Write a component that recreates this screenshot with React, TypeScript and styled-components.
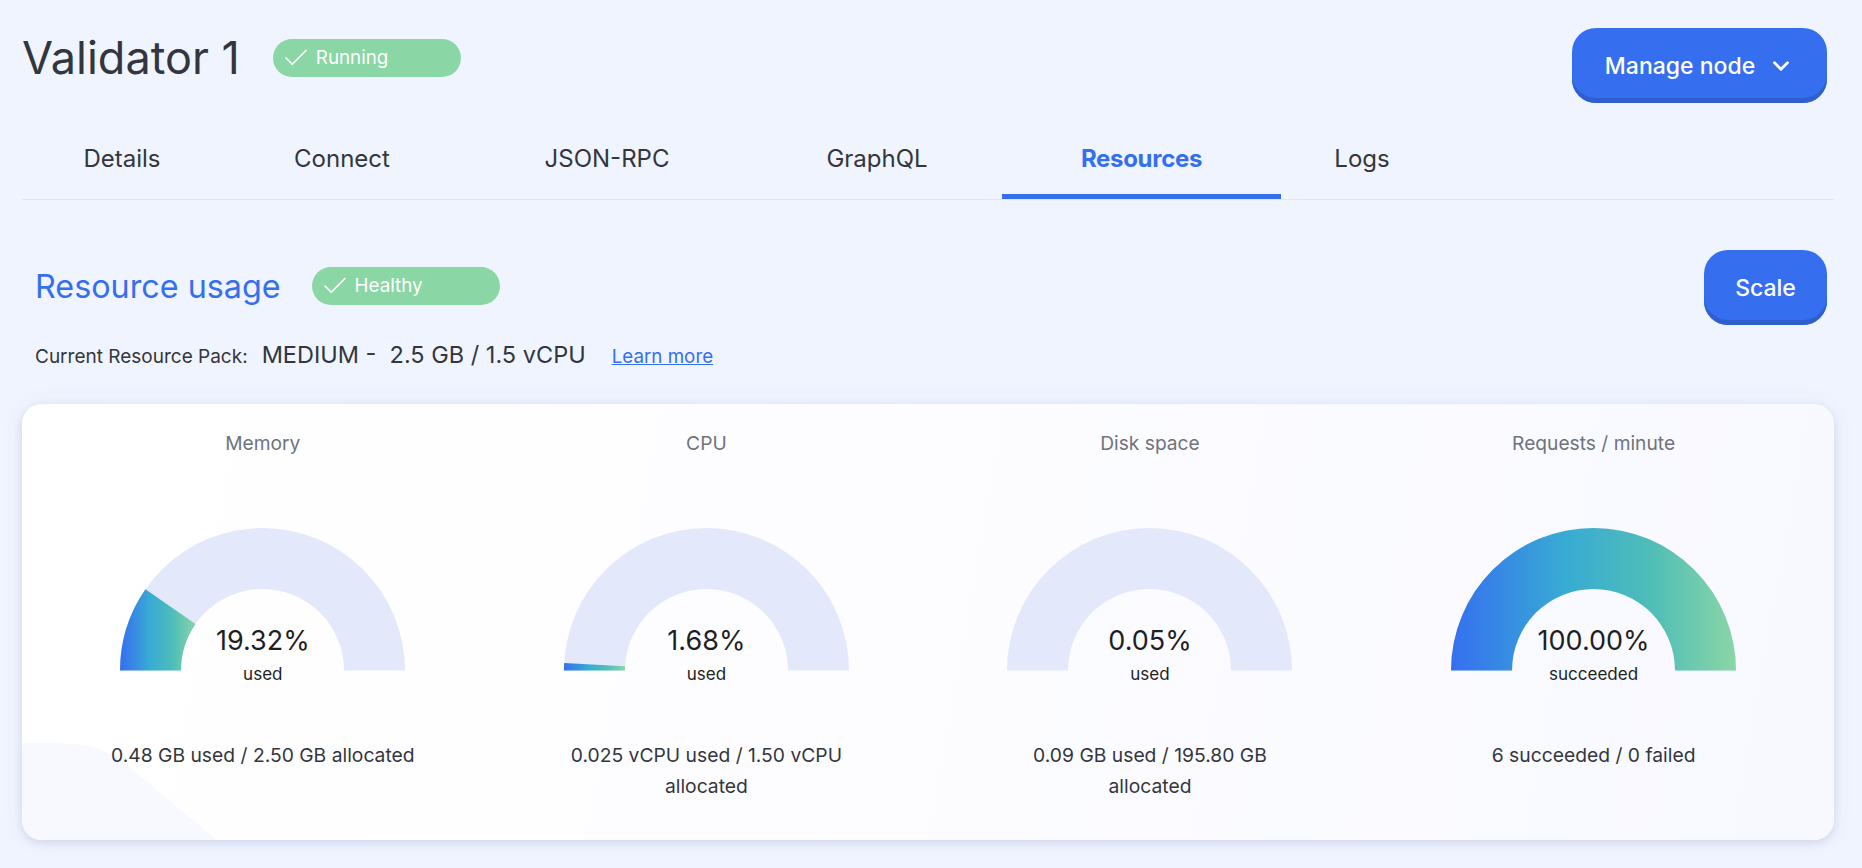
import { useId } from 'react';
import styled, { createGlobalStyle } from 'styled-components';
import { Check, ChevronDown } from 'lucide-react';

const GlobalStyle = createGlobalStyle`
	html, body {
		margin: 0;
		background: #f0f4ff;
	}
	body {
		font-family: Inter, "Noto Sans", sans-serif;
		color: #33363d;
	}
	* {
		box-sizing: border-box;
	}
`;

const Page = styled.div`
	width: 1862px;
	height: 868px;
	overflow: hidden;
	padding: 28px 28px 0 22px;
`;

const HeaderRow = styled.header`
	display: flex;
	justify-content: space-between;
	align-items: flex-start;
	padding-right: 7px;
`;

const TitleGroup = styled.div`
	display: flex;
	align-items: center;
	margin-top: 4px;
	height: 52px;
	gap: 33px;
`;

const Title = styled.h1`
	margin: 0;
	font-size: 45px;
	line-height: 52px;
	font-weight: 400;
	color: #33363d;
`;

const Badge = styled.span`
	display: flex;
	align-items: center;
	gap: 5px;
	width: 188px;
	height: 38px;
	padding-left: 8px;
	border-radius: 19px;
	background: #8ad6a5;
	color: #fff;
	font-size: 18.8px;
	line-height: 20px;
`;

const Button = styled.button<{ $width: number }>`
	display: flex;
	align-items: center;
	justify-content: center;
	gap: 13px;
	width: ${(p) => p.$width}px;
	height: 75px;
	padding: 0;
	border: 0;
	border-radius: 24px;
	background: #356ff0;
	box-shadow: inset 0 -5px 0 #2f5fcc;
	color: #fff;
	font-family: inherit;
	font-size: 23px;
	font-weight: 500;
`;

const Tabs = styled.nav`
	display: grid;
	grid-template-columns: 200px 240px 290px 250px 279px 162px;
	margin-top: 17px;
	border-bottom: 1px solid #dfe5f6;
`;

const Tab = styled.a<{ $active?: boolean }>`
	display: flex;
	align-items: center;
	justify-content: center;
	height: 79px;
	padding-top: 2px;
	border-bottom: 5px solid ${(p) => (p.$active ? '#356ff0' : 'transparent')};
	font-size: 24px;
	font-weight: ${(p) => (p.$active ? 700 : 400)};
	letter-spacing: ${(p) => (p.$active ? '-0.3px' : '0')};
	color: ${(p) => (p.$active ? '#356ff0' : '#33363d')};
`;

const SectionRow = styled.section`
	display: flex;
	justify-content: space-between;
	align-items: flex-start;
	margin-top: 50px;
	padding: 0 7px 0 13px;
`;

const SectionTitleGroup = styled.div`
	display: flex;
	align-items: center;
	gap: 31px;
	margin-top: 17px;
	height: 38px;
`;

const SectionTitle = styled.h2`
	margin: 0;
	padding-top: 2px;
	font-size: 32.3px;
	line-height: 38px;
	font-weight: 400;
	color: #356ff0;
`;

const PackRow = styled.div`
	display: flex;
	align-items: baseline;
	height: 30px;
	margin-top: 15px;
	padding-left: 13px;
`;

const PackLabel = styled.span`
	font-size: 19px;
	line-height: 30px;
	color: #33363d;
`;

const PackValue = styled.span`
	margin-left: 14px;
	font-size: 23.5px;
	line-height: 30px;
	white-space: pre;
	color: #33363d;
`;

const LearnMore = styled.a`
	margin-left: 26px;
	font-size: 18.8px;
	line-height: 30px;
	color: #356ff0;
	text-decoration: underline;
`;

const Card = styled.div`
	position: relative;
	display: grid;
	grid-template-columns: repeat(4, 443.6px);
	height: 436px;
	margin-top: 34px;
	padding: 0 0 0 19px;
	overflow: hidden;
	border-radius: 20px;
	background: linear-gradient(100deg, #ffffff 0%, #fdfdff 45%, #f8f9ff 100%);
	box-shadow: 0 3px 9px rgba(70, 90, 150, 0.17), 0 0 24px rgba(70, 90, 150, 0.05);
	&::before {
		content: '';
		position: absolute;
		left: 0;
		bottom: 0;
		width: 195px;
		height: 97px;
		background: #f8f9ff;
		clip-path: path('M0 0 C 30 0 55 0 71 4 C 85 8 100 18 111 27 L 195 97 L0 97 Z');
	}
`;

const Column = styled.div`
	position: relative;
	display: flex;
	flex-direction: column;
	align-items: center;
	padding-top: 25px;
`;

const ColumnTitle = styled.div`
	font-size: 19.2px;
	line-height: 28px;
	color: #6f737c;
`;

const Gauge = styled.div`
	position: relative;
	width: 285px;
	height: 142px;
	margin-top: 71px;
	svg {
		display: block;
	}
`;

const GaugeText = styled.div`
	position: absolute;
	left: 0;
	right: 0;
	top: 96px;
	display: flex;
	flex-direction: column;
	align-items: center;
`;

const Percent = styled.div`
	font-size: 27px;
	line-height: 34px;
	color: #1d1f24;
`;

const GaugeCaption = styled.div`
	font-size: 17px;
	line-height: 32px;
	color: #1d1f24;
`;

const ColumnNote = styled.div`
	width: 312px;
	margin-top: 70px;
	font-size: 19.3px;
	line-height: 31px;
	text-align: center;
	color: #33363d;
`;

const OUTER = 142.5;
const INNER = 81.5;

// arc slice of the half ring, from the left end up to the given percent
const slicePath = (percent: number) => {
	const a = (Math.PI * percent) / 100;
	const cx = OUTER;
	const cy = OUTER;
	const ox = cx - OUTER * Math.cos(a);
	const oy = cy - OUTER * Math.sin(a);
	const ix = cx - INNER * Math.cos(a);
	const iy = cy - INNER * Math.sin(a);
	return `M${cx - OUTER} ${cy} A${OUTER} ${OUTER} 0 0 1 ${ox} ${oy} L${ix} ${iy} A${INNER} ${INNER} 0 0 0 ${cx - INNER} ${cy} Z`;
};

const GaugeChart = ({ percent }: { percent: number }) => {
	const id = useId();
	return (
		<svg width={285} height={142.5} viewBox='0 0 285 142.5'>
			<defs>
				<linearGradient id={id} x1='0' y1='0' x2='1' y2='0'>
					<stop offset='0%' stopColor='#356ff0' />
					<stop offset='40%' stopColor='#38abd3' />
					<stop offset='70%' stopColor='#4fbdb8' />
					<stop offset='100%' stopColor='#8ad6a5' />
				</linearGradient>
			</defs>
			<path d={slicePath(100)} fill='#e3e9fb' />
			{percent >= 0.1 && <path d={slicePath(percent)} fill={`url(#${id})`} />}
		</svg>
	);
};

const metrics = [
	{ title: 'Memory', percent: 19.32, caption: 'used', note: '0.48 GB used / 2.50 GB allocated' },
	{ title: 'CPU', percent: 1.68, caption: 'used', note: '0.025 vCPU used / 1.50 vCPU allocated' },
	{ title: 'Disk space', percent: 0.05, caption: 'used', note: '0.09 GB used / 195.80 GB allocated' },
	{ title: 'Requests / minute', percent: 100, caption: 'succeeded', note: '6 succeeded / 0 failed' },
];

const tabs = ['Details', 'Connect', 'JSON-RPC', 'GraphQL', 'Resources', 'Logs'];

const App = () => (
	<Page>
		<GlobalStyle />
		<HeaderRow>
			<TitleGroup>
				<Title>Validator 1</Title>
				<Badge>
					<Check size={30} strokeWidth={1.4} />
					Running
				</Badge>
			</TitleGroup>
			<Button $width={255}>
				Manage node
				<ChevronDown size={26} strokeWidth={2.6} />
			</Button>
		</HeaderRow>
		<Tabs>
			{tabs.map((t) => (
				<Tab key={t} $active={t === 'Resources'}>
					{t}
				</Tab>
			))}
		</Tabs>
		<SectionRow>
			<SectionTitleGroup>
				<SectionTitle>Resource usage</SectionTitle>
				<Badge>
					<Check size={30} strokeWidth={1.4} />
					Healthy
				</Badge>
			</SectionTitleGroup>
			<Button $width={123}>Scale</Button>
		</SectionRow>
		<PackRow>
			<PackLabel>Current Resource Pack:</PackLabel>
			<PackValue>MEDIUM -  2.5 GB / 1.5 vCPU</PackValue>
			<LearnMore>Learn more</LearnMore>
		</PackRow>
		<Card>
			{metrics.map((m) => (
				<Column key={m.title}>
					<ColumnTitle>{m.title}</ColumnTitle>
					<Gauge>
						<GaugeChart percent={m.percent} />
						<GaugeText>
							<Percent>{m.percent.toFixed(2)}%</Percent>
							<GaugeCaption>{m.caption}</GaugeCaption>
						</GaugeText>
					</Gauge>
					<ColumnNote>{m.note}</ColumnNote>
				</Column>
			))}
		</Card>
	</Page>
);

export default App;
